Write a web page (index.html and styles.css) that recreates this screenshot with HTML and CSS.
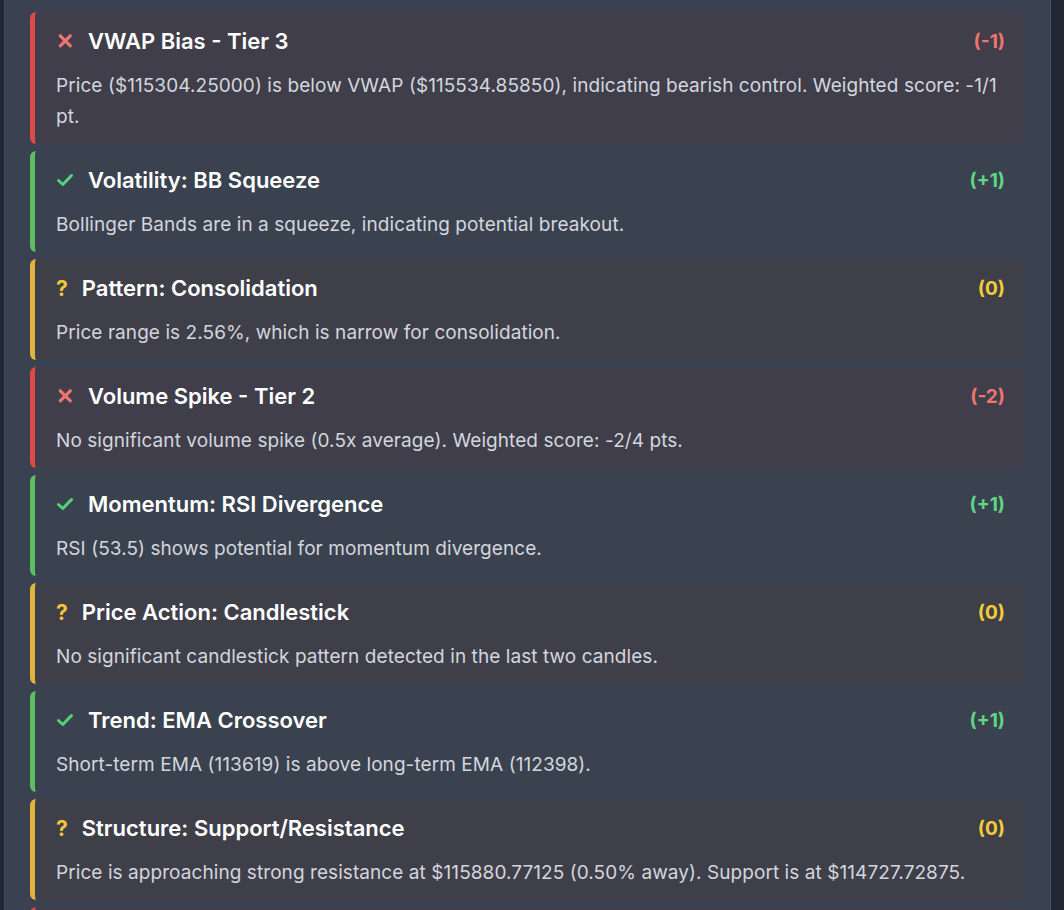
FILE: index.html
```html
<!DOCTYPE html>
<html>
<head>
<meta charset="utf-8">
<link rel="stylesheet" href="styles.css">
</head>
<body>
<div class="panel">
  <div class="list">
    <div class="card red">
      <div class="head">
        <div class="title"><svg class="ic" width="18" height="14" viewBox="0 0 18 14"><path d="M4.3 1.8 L14.3 11.8 M14.3 1.8 L4.3 11.8" stroke="currentColor" stroke-width="3.2" stroke-linecap="round"/></svg><span>VWAP Bias - Tier 3</span></div>
        <div class="score">(-1)</div>
      </div>
      <p class="desc">Price ($115304.25000) is below VWAP ($115534.85850), indicating bearish control. Weighted score: -1/1 pt.</p>
    </div>
    <div class="card green">
      <div class="head">
        <div class="title"><svg class="ic" width="18" height="14" viewBox="0 0 18 14"><path d="M2.5 7.5 L6.8 11.5 L15.5 2.5" fill="none" stroke="currentColor" stroke-width="3" stroke-linecap="round" stroke-linejoin="round"/></svg><span>Volatility: BB Squeeze</span></div>
        <div class="score">(+1)</div>
      </div>
      <p class="desc">Bollinger Bands are in a squeeze, indicating potential breakout.</p>
    </div>
    <div class="card yellow">
      <div class="head">
        <div class="title"><span class="q">?</span><span>Pattern: Consolidation</span></div>
        <div class="score">(0)</div>
      </div>
      <p class="desc">Price range is 2.56%, which is narrow for consolidation.</p>
    </div>
    <div class="card red">
      <div class="head">
        <div class="title"><svg class="ic" width="18" height="14" viewBox="0 0 18 14"><path d="M4.3 1.8 L14.3 11.8 M14.3 1.8 L4.3 11.8" stroke="currentColor" stroke-width="3.2" stroke-linecap="round"/></svg><span>Volume Spike - Tier 2</span></div>
        <div class="score">(-2)</div>
      </div>
      <p class="desc">No significant volume spike (0.5x average). Weighted score: -2/4 pts.</p>
    </div>
    <div class="card green">
      <div class="head">
        <div class="title"><svg class="ic" width="18" height="14" viewBox="0 0 18 14"><path d="M2.5 7.5 L6.8 11.5 L15.5 2.5" fill="none" stroke="currentColor" stroke-width="3" stroke-linecap="round" stroke-linejoin="round"/></svg><span>Momentum: RSI Divergence</span></div>
        <div class="score">(+1)</div>
      </div>
      <p class="desc">RSI (53.5) shows potential for momentum divergence.</p>
    </div>
    <div class="card yellow">
      <div class="head">
        <div class="title"><span class="q">?</span><span>Price Action: Candlestick</span></div>
        <div class="score">(0)</div>
      </div>
      <p class="desc">No significant candlestick pattern detected in the last two candles.</p>
    </div>
    <div class="card green">
      <div class="head">
        <div class="title"><svg class="ic" width="18" height="14" viewBox="0 0 18 14"><path d="M2.5 7.5 L6.8 11.5 L15.5 2.5" fill="none" stroke="currentColor" stroke-width="3" stroke-linecap="round" stroke-linejoin="round"/></svg><span>Trend: EMA Crossover</span></div>
        <div class="score">(+1)</div>
      </div>
      <p class="desc">Short-term EMA (113619) is above long-term EMA (112398).</p>
    </div>
    <div class="card yellow">
      <div class="head">
        <div class="title"><span class="q">?</span><span>Structure: Support/Resistance</span></div>
        <div class="score">(0)</div>
      </div>
      <p class="desc">Price is approaching strong resistance at $115880.77125 (0.50% away). Support is at $114727.72875.</p>
    </div>
    <div class="card red empty"></div>
  </div>
</div>
</body>
</html>
```

FILE: styles.css
```css
html, body {
  margin: 0;
  padding: 0;
  background: #222833;
  font-family: Inter, "Noto Sans", sans-serif;
  height: 910px;
  overflow: hidden;
}

.panel {
  margin-left: 4px;
  width: 1047px;
  min-height: 910px;
  background: #3a4151;
  border-left: 1px solid #444c5b;
  border-right: 1px solid #4a5262;
  padding: 12px 26px 0 25px;
  box-sizing: border-box;
}

.list {
  display: flex;
  flex-direction: column;
  gap: 7px;
}

.card {
  border-left: 5px solid;
  border-radius: 6px;
  padding: 14px 19px 12px 21px;
}

.card.empty { height: 60px; }

.card.red { border-color: #dc4b45; background: #3f3e4a; }
.card.green { border-color: #5cbd62; background: #3a4250; }
.card.yellow { border-color: #e2b33c; background: #3f3f4a; }

.head {
  display: flex;
  justify-content: space-between;
  align-items: center;
  height: 30px;
}

.title {
  display: flex;
  align-items: center;
  font-size: 22px;
  font-weight: 600;
  color: #ffffff;
}

.ic {
  display: block;
  margin-right: 14px;
}

.q {
  font-size: 21px;
  font-weight: 700;
  margin-right: 14px;
}

.red .ic { color: #ee7470; }
.green .ic { color: #56d17a; }
.yellow .q { color: #f6c637; }

.score {
  font-size: 19px;
  font-weight: 700;
}

.red .score { color: #ef7470; }
.green .score { color: #5ed684; }
.yellow .score { color: #f7cb34; }

.desc {
  margin: 14px 0 0 0;
  font-size: 19px;
  line-height: 31px;
  letter-spacing: 0.07px;
  color: #d3d6dd;
}
```
